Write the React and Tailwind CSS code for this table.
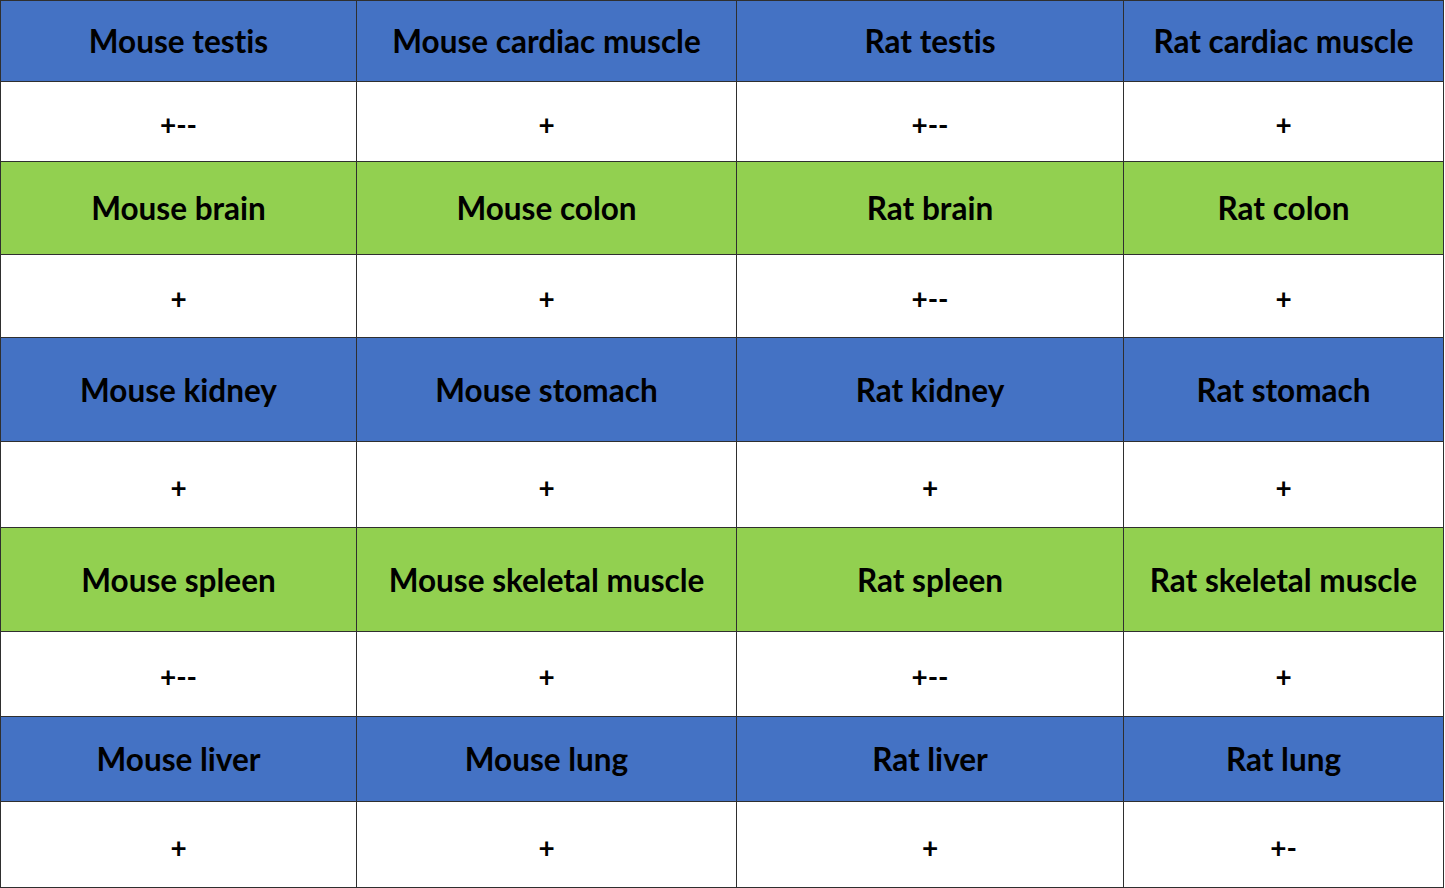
export default function App() {
  const rows = [
    { type: "h", color: "bg-[#4472C4]", h: "h-[81px]", cells: ["Mouse testis", "Mouse cardiac muscle", "Rat testis", "Rat cardiac muscle"] },
    { type: "v", h: "h-[80px]", cells: ["+--", "+", "+--", "+"] },
    { type: "h", color: "bg-[#92D050]", h: "h-[93px]", cells: ["Mouse brain", "Mouse colon", "Rat brain", "Rat colon"] },
    { type: "v", h: "h-[83px]", cells: ["+", "+", "+--", "+"] },
    { type: "h", color: "bg-[#4472C4]", h: "h-[104px]", cells: ["Mouse kidney", "Mouse stomach", "Rat kidney", "Rat stomach"] },
    { type: "v", h: "h-[86px]", cells: ["+", "+", "+", "+"] },
    { type: "h", color: "bg-[#92D050]", h: "h-[104px]", cells: ["Mouse spleen", "Mouse skeletal muscle", "Rat spleen", "Rat skeletal muscle"] },
    { type: "v", h: "h-[85px]", cells: ["+--", "+", "+--", "+"] },
    { type: "h", color: "bg-[#4472C4]", h: "h-[85px]", cells: ["Mouse liver", "Mouse lung", "Rat liver", "Rat lung"] },
    { type: "v", h: "h-[86px]", cells: ["+", "+", "+", "+-"] },
  ];
  const widths = ["w-[356px]", "w-[380px]", "w-[387px]", "w-[320px]"];
  return (
    <div className="w-[1445px] h-[888px] bg-white">
      <div className="w-[1444px] border-t border-l border-[#2f2f2f] flex flex-col text-black font-bold [font-variant-ligatures:none]" style={{ fontFamily: "Lato, 'Liberation Sans', sans-serif" }}>
        {rows.map((r, i) => (
          <div key={i} className={`flex ${r.h}`}>
            {r.cells.map((c, j) => (
              <div
                key={j}
                className={`${widths[j]} h-full flex items-center justify-center border-r border-b border-[#2f2f2f] ${r.type === "h" ? r.color + " text-[31.5px] pt-[2px]" : "bg-white text-[28px] pt-[4px]"}`}
              >
                {c}
              </div>
            ))}
          </div>
        ))}
      </div>
    </div>
  );
}
